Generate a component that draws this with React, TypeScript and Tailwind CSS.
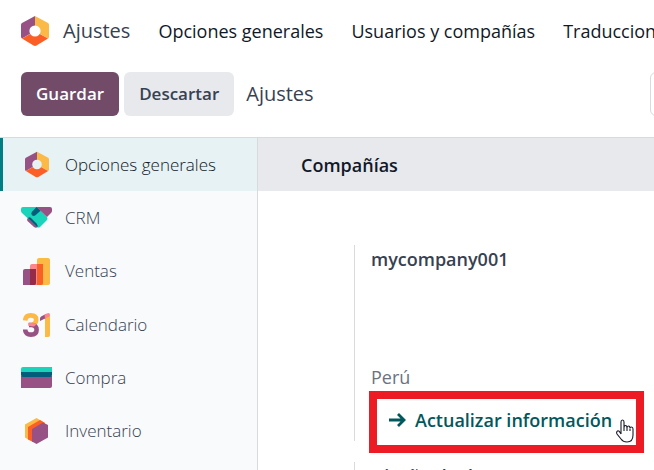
import type { ReactNode } from "react";

function HexRing({ className, hole }: { className: string; hole: string }) {
  return (
    <svg viewBox="0 0 28 30" className={className} aria-hidden="true">
      <path d="M14 0 1 7Q0 7.600 0 9V20.500Q0 22 1 22.500L14 15Z" fill="#985184" />
      <path d="M14 0 27 7Q28 7.600 28 9V20.500Q28 22 27 22.500L14 15Z" fill="#FBB945" />
      <path d="M1 22.500 11 17H17L27 22.500 15.500 29.500Q14 30.400 12.500 29.500Z" fill="#FC5F26" />
      <circle cx="14" cy="15" r="5.600" fill={hole} />
    </svg>
  );
}

function CrmIcon() {
  return (
    <svg viewBox="0 0 31 21" className="h-[21px] w-[31px]" aria-hidden="true">
      <path d="M2 0H16L26 10Q27 12 25.500 13.500L19 20Q17.500 21.200 16 20L1 6Q0 5 0 4V2Q0 0 2 0Z" fill="#1AD3BB" />
      <path d="M15.500 0H29Q31 0 31 2V4Q31 5 30 6L26 10Z" fill="#985184" />
      <path d="M7 11Q5.500 12 6.500 14L13 20Q15 21.300 16.500 20Z" fill="#985184" />
      <path d="M7 11Q8.500 9.500 10 11L15.500 16.500Q17.500 18.500 16.300 20.200Z" fill="#005E7A" />
      <path d="M15.500 0 19.500 3.800 14.500 8.300Q12.500 9.800 11 8.300Q9.500 6.500 11 4.700Z" fill="#005E7A" />
    </svg>
  );
}

function SalesIcon() {
  return (
    <svg viewBox="0 0 27 27" className="h-[27px] w-[27px]" aria-hidden="true">
      <path d="M16 0H25Q27 0 27 2V25Q27 27 25 27H14V2Q14 0 16 0Z" fill="#FBB945" />
      <path d="M9 6H20V25Q20 27 18 27H7V8Q7 6 9 6Z" fill="#FC868B" />
      <path d="M14 6H20V25Q20 27 18 27H14Z" fill="#F86126" />
      <path d="M2 11H13V25Q13 27 11 27H0V13Q0 11 2 11Z" fill="#985184" />
      <path d="M7 11H13V25Q13 27 11 27H7Z" fill="#962B48" />
    </svg>
  );
}

function CalendarIcon() {
  return (
    <svg viewBox="0 0 27 24" className="h-6 w-[27px]" aria-hidden="true">
      <path d="M2.200 7.500Q2.500 2.400 7.800 2.400Q13.200 2.400 13.200 6.800Q13.200 10.500 9.500 11.800" fill="none" stroke="#FBB945" strokeWidth="4.600" />
      <path d="M6 12H8.500Q13.600 12.300 13.600 16.700Q13.600 21.600 7.900 21.600Q2.400 21.600 2.200 16.500" fill="none" stroke="#985184" strokeWidth="4.600" />
      <path d="M5.200 9.700H10Q12.500 10 13.300 11.500L11 13.500 5.200 12.700Z" fill="#FC868B" />
      <path d="M22 4 27 2V22Q27 24 25 24H22Z" fill="#FBB945" />
      <path d="M17 5.500Q17 4 18.500 3.300L23 1V5L17 8Z" fill="#985184" />
      <path d="M21.500 1.800Q24 0 25.500 0Q27 0 27 2Q26.500 4.500 22 5.300Z" fill="#FC868B" />
    </svg>
  );
}

function PurchaseIcon() {
  return (
    <svg viewBox="0 0 31 21" className="h-[21px] w-[31px]" aria-hidden="true">
      <path d="M0 9H31V19Q31 21 29 21H0Z" fill="#985184" />
      <path d="M2 0H31V6H0V2Q0 0 2 0Z" fill="#1AD3BB" />
      <path d="M0 5H31V8Q31 10 29 10H2Q0 10 0 8Z" fill="#005E7A" />
    </svg>
  );
}

function InventoryIcon() {
  return (
    <svg viewBox="0 0 23 26" className="h-[26px] w-[23px]" aria-hidden="true">
      <path d="M11.500 0 20 5 4 22 0 19.500V6.500Z" fill="#FBB945" />
      <path d="M15 2 20 5 8 24 3 21.500V9Z" fill="#FC5F26" />
      <path d="M7 11 18 4.500 23 7V19.500L11.500 26 7 23.500Z" fill="#985184" />
    </svg>
  );
}

const apps: { label: string; icon: ReactNode }[] = [
  { label: "Opciones generales", icon: <HexRing className="h-[27px] w-6" hole="#e6f2f3" /> },
  { label: "CRM", icon: <CrmIcon /> },
  { label: "Ventas", icon: <SalesIcon /> },
  { label: "Calendario", icon: <CalendarIcon /> },
  { label: "Compra", icon: <PurchaseIcon /> },
  { label: "Inventario", icon: <InventoryIcon /> },
];

export default function App() {
  return (
    <div className="flex h-screen flex-col overflow-hidden bg-white font-['Open_Sans',sans-serif] text-[18px] leading-6 text-[#374151]">
      <header className="flex shrink-0 items-center gap-7 whitespace-nowrap px-[21px] pt-4">
        <a href="#ajustes" className="flex items-center gap-[14px] text-[20px] leading-7">
          <HexRing className="h-[30px] w-7" hole="#ffffff" />
          Ajustes
        </a>
        <nav className="flex gap-7 text-[#111827]">
          <a href="#opciones">Opciones generales</a>
          <a href="#usuarios">Usuarios y compañías</a>
          <a href="#traducciones">Traducciones</a>
        </nav>
      </header>

      <div className="flex shrink-0 items-center border-b border-[#d8dadd] pt-[26px] pb-[21px] pl-[21px]">
        <button className="h-11 rounded-md bg-[#714B67] px-[15px] text-[17px] font-semibold text-white">Guardar</button>
        <button className="ml-[5px] h-11 rounded-md bg-[#e7e9ed] px-[15px] text-[17px] font-semibold">Descartar</button>
        <h1 className="ml-3 text-[20px] leading-7">Ajustes</h1>
        <input
          aria-label="Buscar"
          className="-mr-40 ml-auto h-11 w-[164px] shrink-0 rounded-md border border-[#d8dadd]"
        />
      </div>

      <div className="flex min-h-0 flex-1">
        <aside className="w-[258px] shrink-0 border-r border-[#d8dadd] bg-[#f9fafb]">
          <ul className="grid h-80 grid-rows-6 text-[17px] font-light">
            {apps.map((app, i) => (
              <li key={app.label}>
                <a
                  href={"#" + app.label}
                  className={
                    "flex h-full items-center gap-[13px] border-l-[3px] pl-[18px] " +
                    (i === 0 ? "border-[#017e84] bg-[#e6f2f3] text-[#111827]" : "border-transparent")
                  }
                >
                  <span className="flex w-[31px] justify-center">{app.icon}</span>
                  {app.label}
                </a>
              </li>
            ))}
          </ul>
        </aside>

        <main className="min-w-0 flex-1">
          <h2 className="flex h-[53px] items-center bg-[#e7e9ed] pl-[43px] font-semibold text-[#111827]">Compañías</h2>
          <section className="mt-[54px] ml-24 flex h-[196px] flex-col border-l border-[#d8dadd] pl-4">
            <h3 className="pt-[2px] font-semibold">mycompany001</h3>
            <p className="mt-auto text-[#6b7280]">Perú</p>
            <div className="relative mt-[2px] -mb-3 -ml-[2px] flex h-[62px] w-[275px] shrink-0 items-center border-8 border-[#ed1c24] pb-1 pl-3">
              <a href="#compania" className="flex items-center gap-[9px] font-semibold text-[#01585c]">
                <svg viewBox="0 0 17 14" className="h-[14px] w-[17px]" fill="none" stroke="currentColor" strokeWidth="2.800" aria-hidden="true">
                  <path d="M0 7H15M9 1 15 7 9 13" />
                </svg>
                Actualizar información
              </a>
              <svg viewBox="0 0 18 24" className="absolute right-[2px] bottom-[2px] h-6 w-[18px]" fill="#fff" stroke="#1b1b2b" strokeWidth="1.100" aria-hidden="true">
                <path d="M5 15V3Q5 1 6.500 1T8 3V9Q8 6.500 9.500 6.500T11 9Q11 7 12.500 7T14 9.500Q14 8 15.500 8T17 10V16Q17 23 11 23Q7 23 5 20L1 15Q0 13 1.500 12T5 15M8 9V12M11 9V12M14 10V12" />
              </svg>
            </div>
          </section>
          <section className="mt-[21px] ml-24 border-l border-[#d8dadd] pt-[2px] pl-4">
            <h3 className="font-semibold">Diseño de documento</h3>
          </section>
        </main>
      </div>
    </div>
  );
}
